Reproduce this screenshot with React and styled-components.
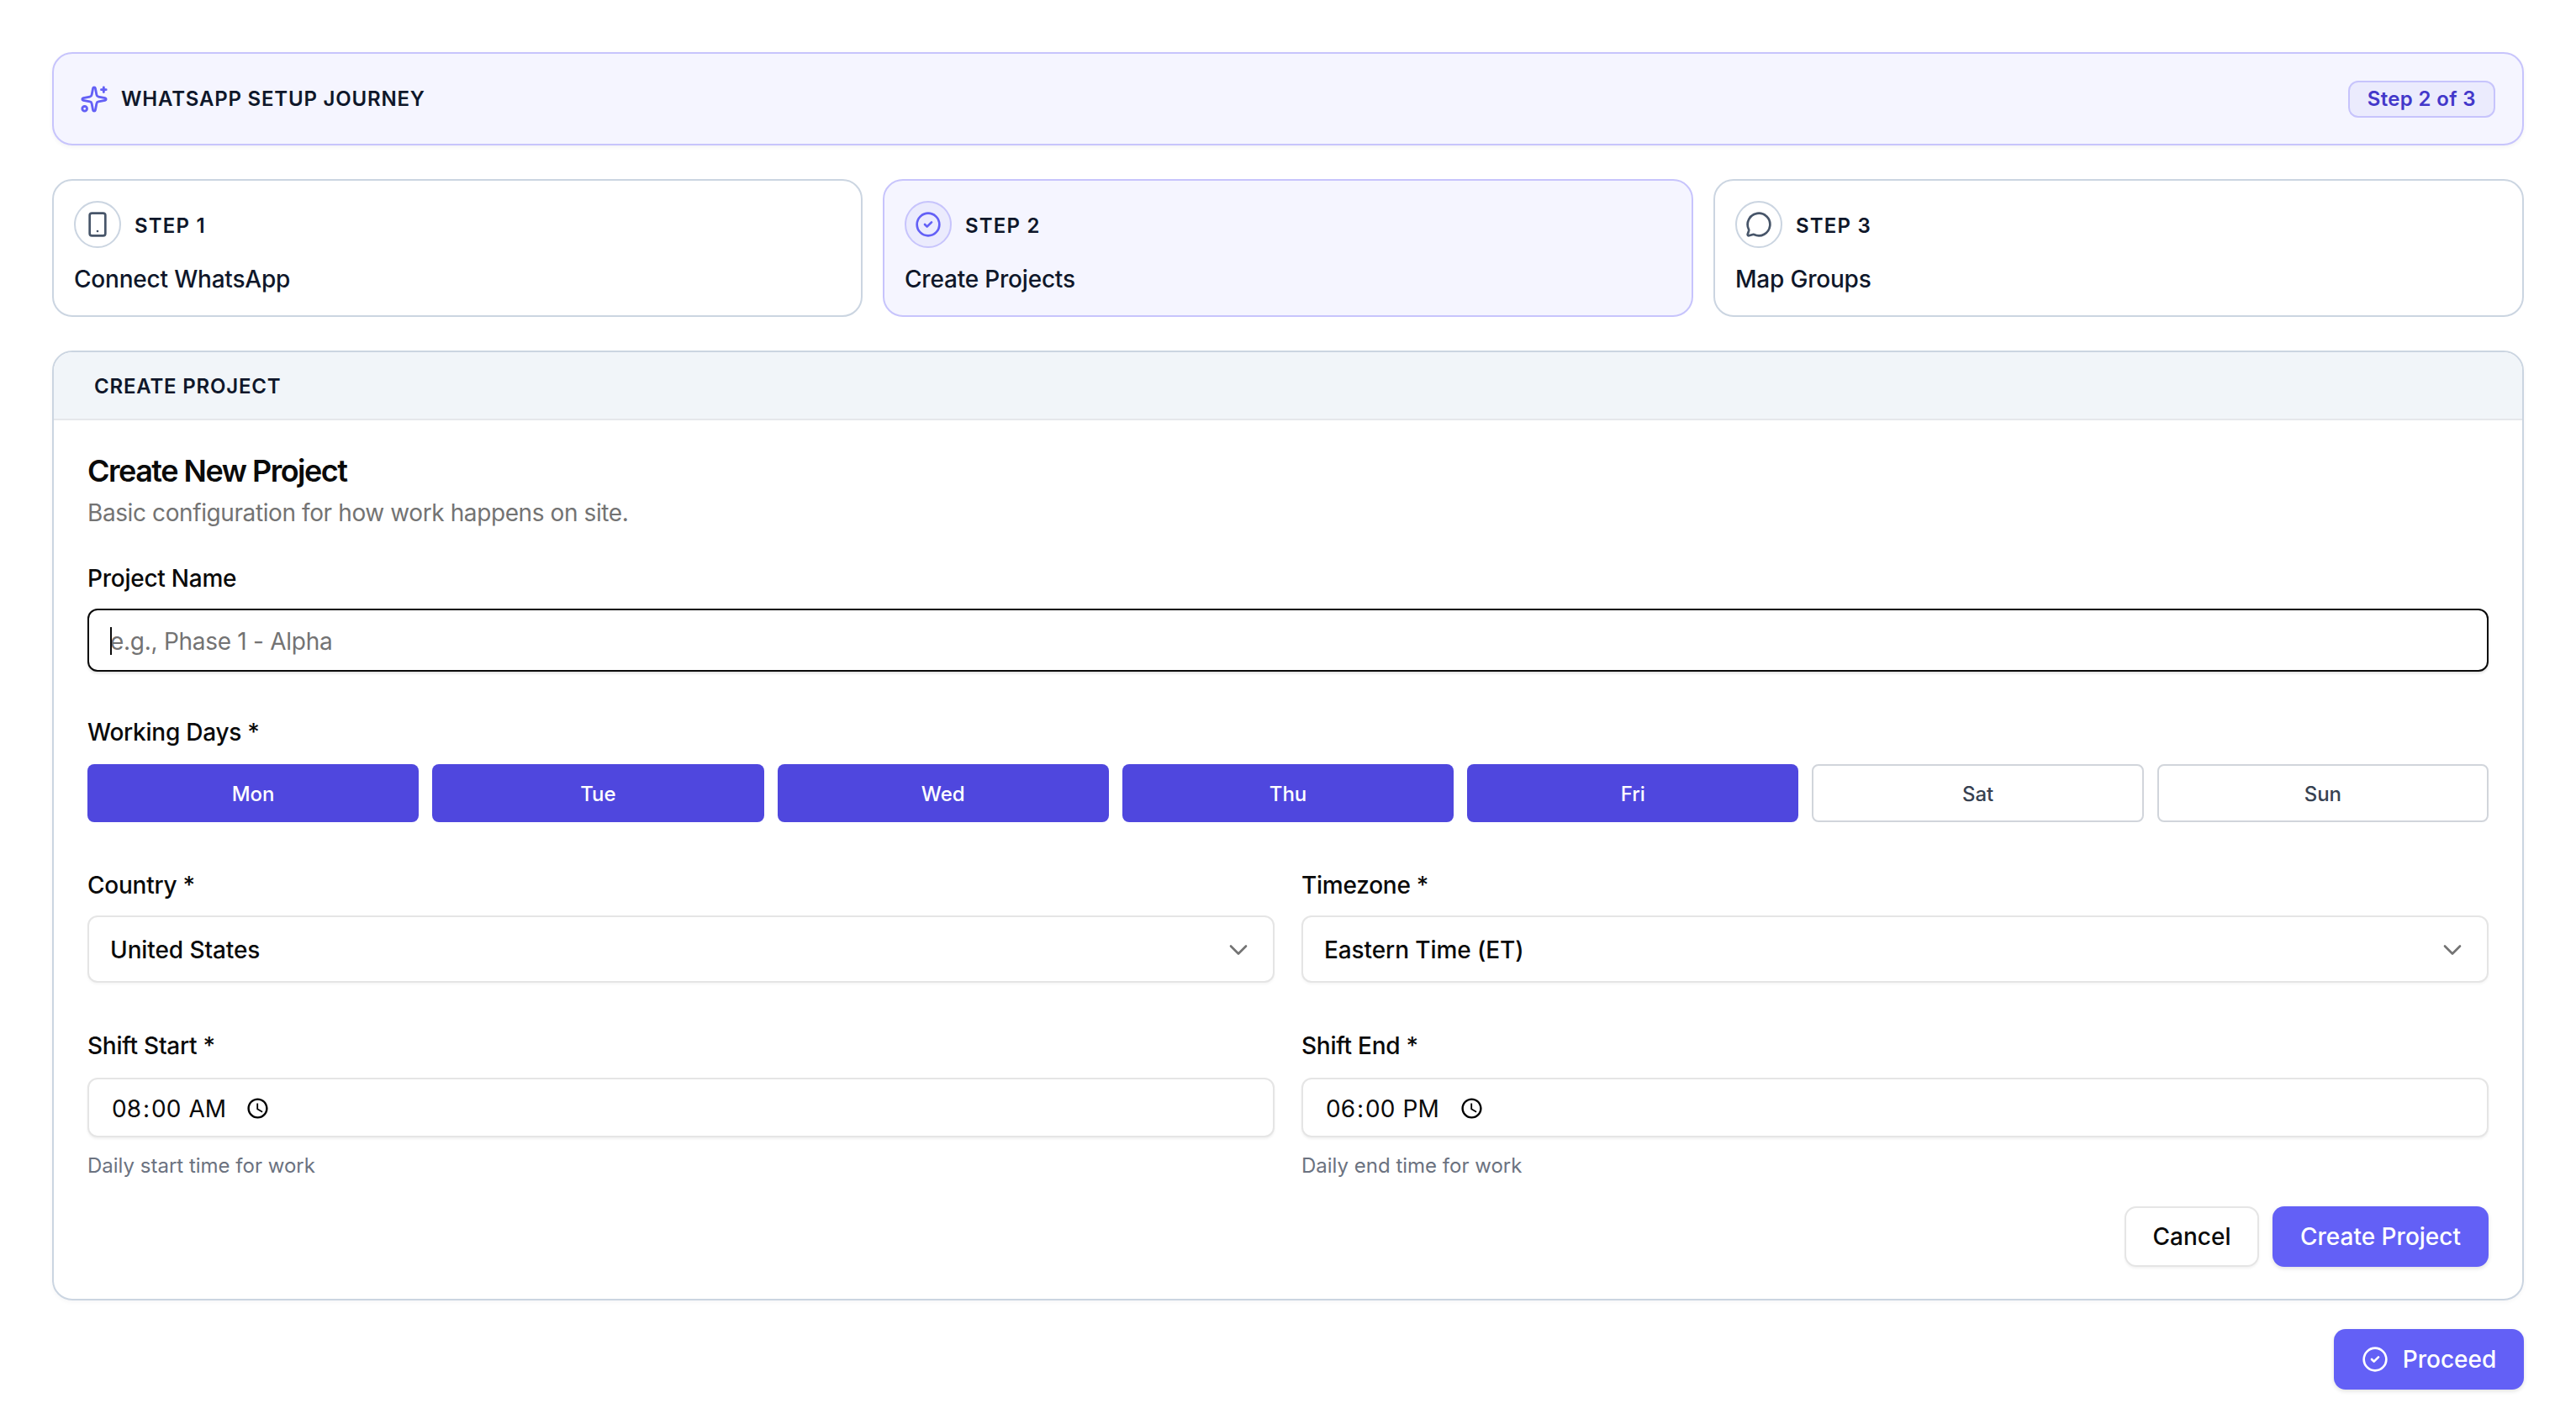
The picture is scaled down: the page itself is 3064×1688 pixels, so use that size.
import React from "react";
import styled, { createGlobalStyle } from "styled-components";
import { Sparkles, Smartphone, CircleCheck, MessageCircle, ChevronDown } from "lucide-react";

const GlobalStyle = createGlobalStyle`
  html, body {
    margin: 0;
    padding: 0;
    background: #ffffff;
    font-family: Inter, "Noto Sans", sans-serif;
    color: #0a0a0a;
  }
  * {
    box-sizing: border-box;
  }
`;

const Page = styled.div`
  display: flex;
  flex-direction: column;
  width: 3064px;
  height: 1688px;
  padding: 62px 62px 0;
`;

const Banner = styled.div`
  display: flex;
  align-items: center;
  justify-content: space-between;
  height: 111px;
  padding: 0 32px 0 31px;
  background: #f5f5ff;
  border: 2px solid #c7c4fc;
  border-radius: 24px;
  box-shadow: 0 2px 5px rgba(15, 23, 42, 0.05);
`;

const BannerTitle = styled.div`
  display: flex;
  align-items: center;
  gap: 15px;
  font-size: 24px;
  font-weight: 600;
  letter-spacing: 0.8px;
  color: #0f172a;
  svg {
    color: #6360f6;
  }
`;

const Badge = styled.span`
  display: flex;
  align-items: center;
  height: 44px;
  padding: 0 21px;
  background: #ebebfd;
  border: 2px solid #c7c4fc;
  border-radius: 12px;
  font-size: 24px;
  font-weight: 600;
  letter-spacing: 0.36px;
  color: #4338ca;
`;

const StepRow = styled.div`
  display: grid;
  grid-template-columns: repeat(3, 1fr);
  gap: 24px;
  margin-top: 40px;
`;

const StepCard = styled.div`
  height: 164px;
  padding: 24px;
  background: ${(p) => (p.$active ? "#f5f5ff" : "#ffffff")};
  border: 2px solid ${(p) => (p.$active ? "#c7c4fc" : "#cbd5e1")};
  border-radius: 24px;
`;

const StepHead = styled.div`
  display: flex;
  align-items: center;
  gap: 16px;
`;

const StepCircle = styled.div`
  display: flex;
  align-items: center;
  justify-content: center;
  width: 56px;
  height: 56px;
  background: ${(p) => (p.$active ? "#ebebfd" : "#ffffff")};
  border: 2px solid ${(p) => (p.$active ? "#c7c4fc" : "#cbd5e1")};
  border-radius: 50%;
  color: ${(p) => (p.$active ? "#6360f6" : "#475569")};
`;

const StepLabel = styled.span`
  padding-top: 2px;
  font-size: 24px;
  font-weight: 600;
  letter-spacing: 1.2px;
  color: #0f172a;
`;

const StepName = styled.div`
  margin-top: 17px;
  font-size: 28px;
  font-weight: 500;
  line-height: 40px;
  letter-spacing: -0.2px;
  color: #0f172a;
`;

const FormCard = styled.div`
  margin-top: 40px;
  height: 1130px;
  background: #ffffff;
  border: 2px solid #cbd5e1;
  border-radius: 24px;
  overflow: hidden;
  box-shadow: 0 2px 5px rgba(15, 23, 42, 0.04);
`;

const FormHeader = styled.div`
  display: flex;
  align-items: center;
  height: 81px;
  padding: 2px 48px 0;
  background: #f1f5f9;
  border-bottom: 2px solid #e5e7eb;
  font-size: 24px;
  font-weight: 600;
  letter-spacing: 0.8px;
  color: #0f172a;
`;

const FormBody = styled.div`
  display: flex;
  flex-direction: column;
  padding: 38px 40px 0;
`;

const FormTitle = styled.h2`
  margin: 0;
  font-size: 36px;
  font-weight: 600;
  line-height: 44px;
  letter-spacing: -1.5px;
  color: #0a0a0a;
`;

const FormSubtitle = styled.p`
  margin: 8px 0 0;
  font-size: 28px;
  line-height: 40px;
  letter-spacing: -0.4px;
  color: #737373;
`;

const Field = styled.div`
  display: flex;
  flex-direction: column;
  margin-top: ${(p) => p.$top || 0}px;
`;

const Label = styled.label`
  font-size: 28px;
  font-weight: 500;
  line-height: 40px;
  letter-spacing: -0.25px;
  color: #0a0a0a;
`;

const InputWrap = styled.div`
  position: relative;
  margin-top: 16px;
`;

const TextInput = styled.input`
  display: block;
  width: 100%;
  height: 75px;
  padding: 2px 25px 0;
  background: #ffffff;
  border: 2px solid #0a0a0a;
  border-radius: 12px;
  box-shadow: 0 2px 3px rgba(0, 0, 0, 0.12);
  font-family: inherit;
  font-size: 28px;
  letter-spacing: -0.28px;
  color: #0a0a0a;
  outline: none;
  &::placeholder {
    color: #737373;
    opacity: 1;
  }
`;

const Caret = styled.span`
  position: absolute;
  top: 22px;
  left: 27px;
  width: 2px;
  height: 33px;
  background: #0a0a0a;
`;

const DayRow = styled.div`
  display: grid;
  grid-template-columns: repeat(7, 1fr);
  gap: 16px;
  margin-top: 18px;
`;

const DayButton = styled.button`
  height: 69px;
  padding: 2px 0 0;
  background: ${(p) => (p.$on ? "#4f47de" : "#ffffff")};
  border: ${(p) => (p.$on ? "none" : "2px solid #d1d5db")};
  border-radius: 8px;
  font-family: inherit;
  font-size: 24px;
  font-weight: 500;
  color: ${(p) => (p.$on ? "#ffffff" : "#374151")};
`;

const TwoCols = styled.div`
  display: grid;
  grid-template-columns: 1fr 1fr;
  gap: 32px;
  margin-top: ${(p) => p.$top || 0}px;
`;

const SelectBox = styled.div`
  display: flex;
  align-items: center;
  justify-content: space-between;
  height: 80px;
  margin-top: 16px;
  padding: 2px 23px 0 25px;
  background: #ffffff;
  border: 2px solid #e5e5e5;
  border-radius: 12px;
  box-shadow: 0 2px 3px rgba(0, 0, 0, 0.04);
  font-size: 28px;
  font-weight: 500;
  letter-spacing: -0.1px;
  color: #0a0a0a;
  svg {
    color: #737373;
  }
`;

const TimeInput = styled.input`
  display: flex;
  width: 100%;
  height: 71px;
  margin-top: 18px;
  padding: 2px 26px 0;
  background: #ffffff;
  border: 2px solid #e5e5e5;
  border-radius: 12px;
  box-shadow: 0 2px 3px rgba(0, 0, 0, 0.06);
  font-family: inherit;
  font-size: 28px;
  color: #0a0a0a;
  outline: none;
  &::-webkit-datetime-edit {
    flex: 0 0 136px;
  }
  &::-webkit-datetime-edit-text {
    padding: 0 1px;
  }
  &::-webkit-calendar-picker-indicator {
    margin-left: 21px;
  }
`;

const Hint = styled.span`
  margin-top: 18px;
  font-size: 24px;
  line-height: 32px;
  color: #6b7280;
`;

const Actions = styled.div`
  display: flex;
  justify-content: flex-end;
  gap: 16px;
  margin-top: 32px;
`;

const GhostButton = styled.button`
  width: 160px;
  height: 72px;
  background: #ffffff;
  border: 2px solid #e5e5e5;
  border-radius: 14px;
  box-shadow: 0 2px 3px rgba(0, 0, 0, 0.05);
  font-family: inherit;
  font-size: 28px;
  font-weight: 500;
  color: #0a0a0a;
`;

const PrimaryButton = styled.button`
  display: flex;
  align-items: center;
  justify-content: center;
  gap: 17px;
  width: ${(p) => p.$width}px;
  height: 72px;
  background: #6360f6;
  border: none;
  border-radius: 14px;
  box-shadow: 0 2px 5px rgba(0, 0, 0, 0.12);
  font-family: inherit;
  font-size: 28px;
  font-weight: 500;
  color: #ffffff;
`;

const Footer = styled.div`
  display: flex;
  justify-content: flex-end;
  margin-top: 34px;
`;

const steps = [
  { label: "STEP 1", name: "Connect WhatsApp", Icon: Smartphone },
  { label: "STEP 2", name: "Create Projects", Icon: CircleCheck, active: true },
  { label: "STEP 3", name: "Map Groups", Icon: MessageCircle },
];

const days = [
  { name: "Mon", on: true },
  { name: "Tue", on: true },
  { name: "Wed", on: true },
  { name: "Thu", on: true },
  { name: "Fri", on: true },
  { name: "Sat", on: false },
  { name: "Sun", on: false },
];

const App = () => {
  return (
    <>
      <GlobalStyle />
      <Page>
        <Banner>
          <BannerTitle>
            <Sparkles size={34} strokeWidth={2} />
            WHATSAPP SETUP JOURNEY
          </BannerTitle>
          <Badge>Step 2 of 3</Badge>
        </Banner>

        <StepRow>
          {steps.map(({ label, name, Icon, active }) => (
            <StepCard key={label} $active={active}>
              <StepHead>
                <StepCircle $active={active}>
                  <Icon size={32} strokeWidth={2} />
                </StepCircle>
                <StepLabel>{label}</StepLabel>
              </StepHead>
              <StepName>{name}</StepName>
            </StepCard>
          ))}
        </StepRow>

        <FormCard>
          <FormHeader>CREATE PROJECT</FormHeader>
          <FormBody>
            <FormTitle>Create New Project</FormTitle>
            <FormSubtitle>Basic configuration for how work happens on site.</FormSubtitle>

            <Field $top={38}>
              <Label>Project Name</Label>
              <InputWrap>
                <TextInput placeholder="e.g., Phase 1 - Alpha" />
                <Caret />
              </InputWrap>
            </Field>

            <Field $top={52}>
              <Label>Working Days *</Label>
              <DayRow>
                {days.map((d) => (
                  <DayButton key={d.name} $on={d.on}>
                    {d.name}
                  </DayButton>
                ))}
              </DayRow>
            </Field>

            <TwoCols $top={55}>
              <Field>
                <Label>Country *</Label>
                <SelectBox>
                  United States
                  <ChevronDown size={36} strokeWidth={1.75} />
                </SelectBox>
              </Field>
              <Field>
                <Label>Timezone *</Label>
                <SelectBox>
                  Eastern Time (ET)
                  <ChevronDown size={36} strokeWidth={1.75} />
                </SelectBox>
              </Field>
            </TwoCols>

            <TwoCols $top={55}>
              <Field>
                <Label>Shift Start *</Label>
                <TimeInput type="time" defaultValue="08:00" />
                <Hint>Daily start time for work</Hint>
              </Field>
              <Field>
                <Label>Shift End *</Label>
                <TimeInput type="time" defaultValue="18:00" />
                <Hint>Daily end time for work</Hint>
              </Field>
            </TwoCols>

            <Actions>
              <GhostButton>Cancel</GhostButton>
              <PrimaryButton $width={257}>Create Project</PrimaryButton>
            </Actions>
          </FormBody>
        </FormCard>

        <Footer>
          <PrimaryButton $width={226}>
            <CircleCheck size={32} strokeWidth={2} />
            Proceed
          </PrimaryButton>
        </Footer>
      </Page>
    </>
  );
};

export default App;
